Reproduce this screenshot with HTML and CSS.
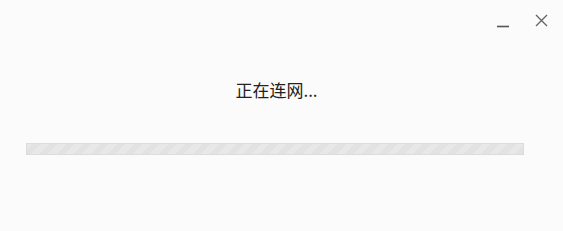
FILE: index.html
```html
<!DOCTYPE html>
<html lang="zh-CN">
<head>
    <meta charset="UTF-8">
    <title>正在连网</title>
    <link rel="stylesheet" href="styles.css">
</head>
<body>
    <div class="window">
        <div class="title-bar">
            <button class="win-btn min-btn" title="最小化">
                <svg width="12" height="12" viewBox="0 0 12 12"><path d="M0 10.5 H12" stroke="#555" stroke-width="1.6"/></svg>
            </button>
            <button class="win-btn close-btn" title="关闭">
                <svg width="13" height="13" viewBox="0 0 13 13"><path d="M1 1 L12 12 M12 1 L1 12" stroke="#666" stroke-width="1.4"/></svg>
            </button>
        </div>

        <p class="status">正在连网...</p>

        <div class="progress">
            <div class="progress-fill"></div>
        </div>
    </div>
</body>
</html>
```

FILE: styles.css
```css
body {
    margin: 0;
    background-color: #fbfbfb;
    font-family: "Noto Sans CJK SC", "Microsoft YaHei", sans-serif;
}

.window {
    width: 563px;
    height: 231px;
    display: flex;
    flex-direction: column;
}

.title-bar {
    display: flex;
    justify-content: flex-end;
    align-items: flex-start;
    gap: 26px;
    padding: 14px 15px 0 0;
    height: 24px;
}

.win-btn {
    background: none;
    border: none;
    padding: 0;
    width: 13px;
    height: 13px;
    display: flex;
    cursor: pointer;
}

.min-btn {
    width: 12px;
    margin-top: 2px;
}

.status {
    margin: 41px 0 0 0;
    padding-right: 10px;
    text-align: center;
    font-size: 17px;
    line-height: 22px;
    color: #222;
}

.progress {
    margin: 42px 0 0 26px;
    width: 498px;
    height: 12px;
    box-sizing: border-box;
    border: 1px solid #dcdcdc;
    background-color: #e4e4e4;
}

.progress-fill {
    height: 100%;
    background-image: repeating-linear-gradient(
        -45deg,
        #e2e2e2 0,
        #e2e2e2 6px,
        #e8e8e8 6px,
        #e8e8e8 12px
    );
}
```
